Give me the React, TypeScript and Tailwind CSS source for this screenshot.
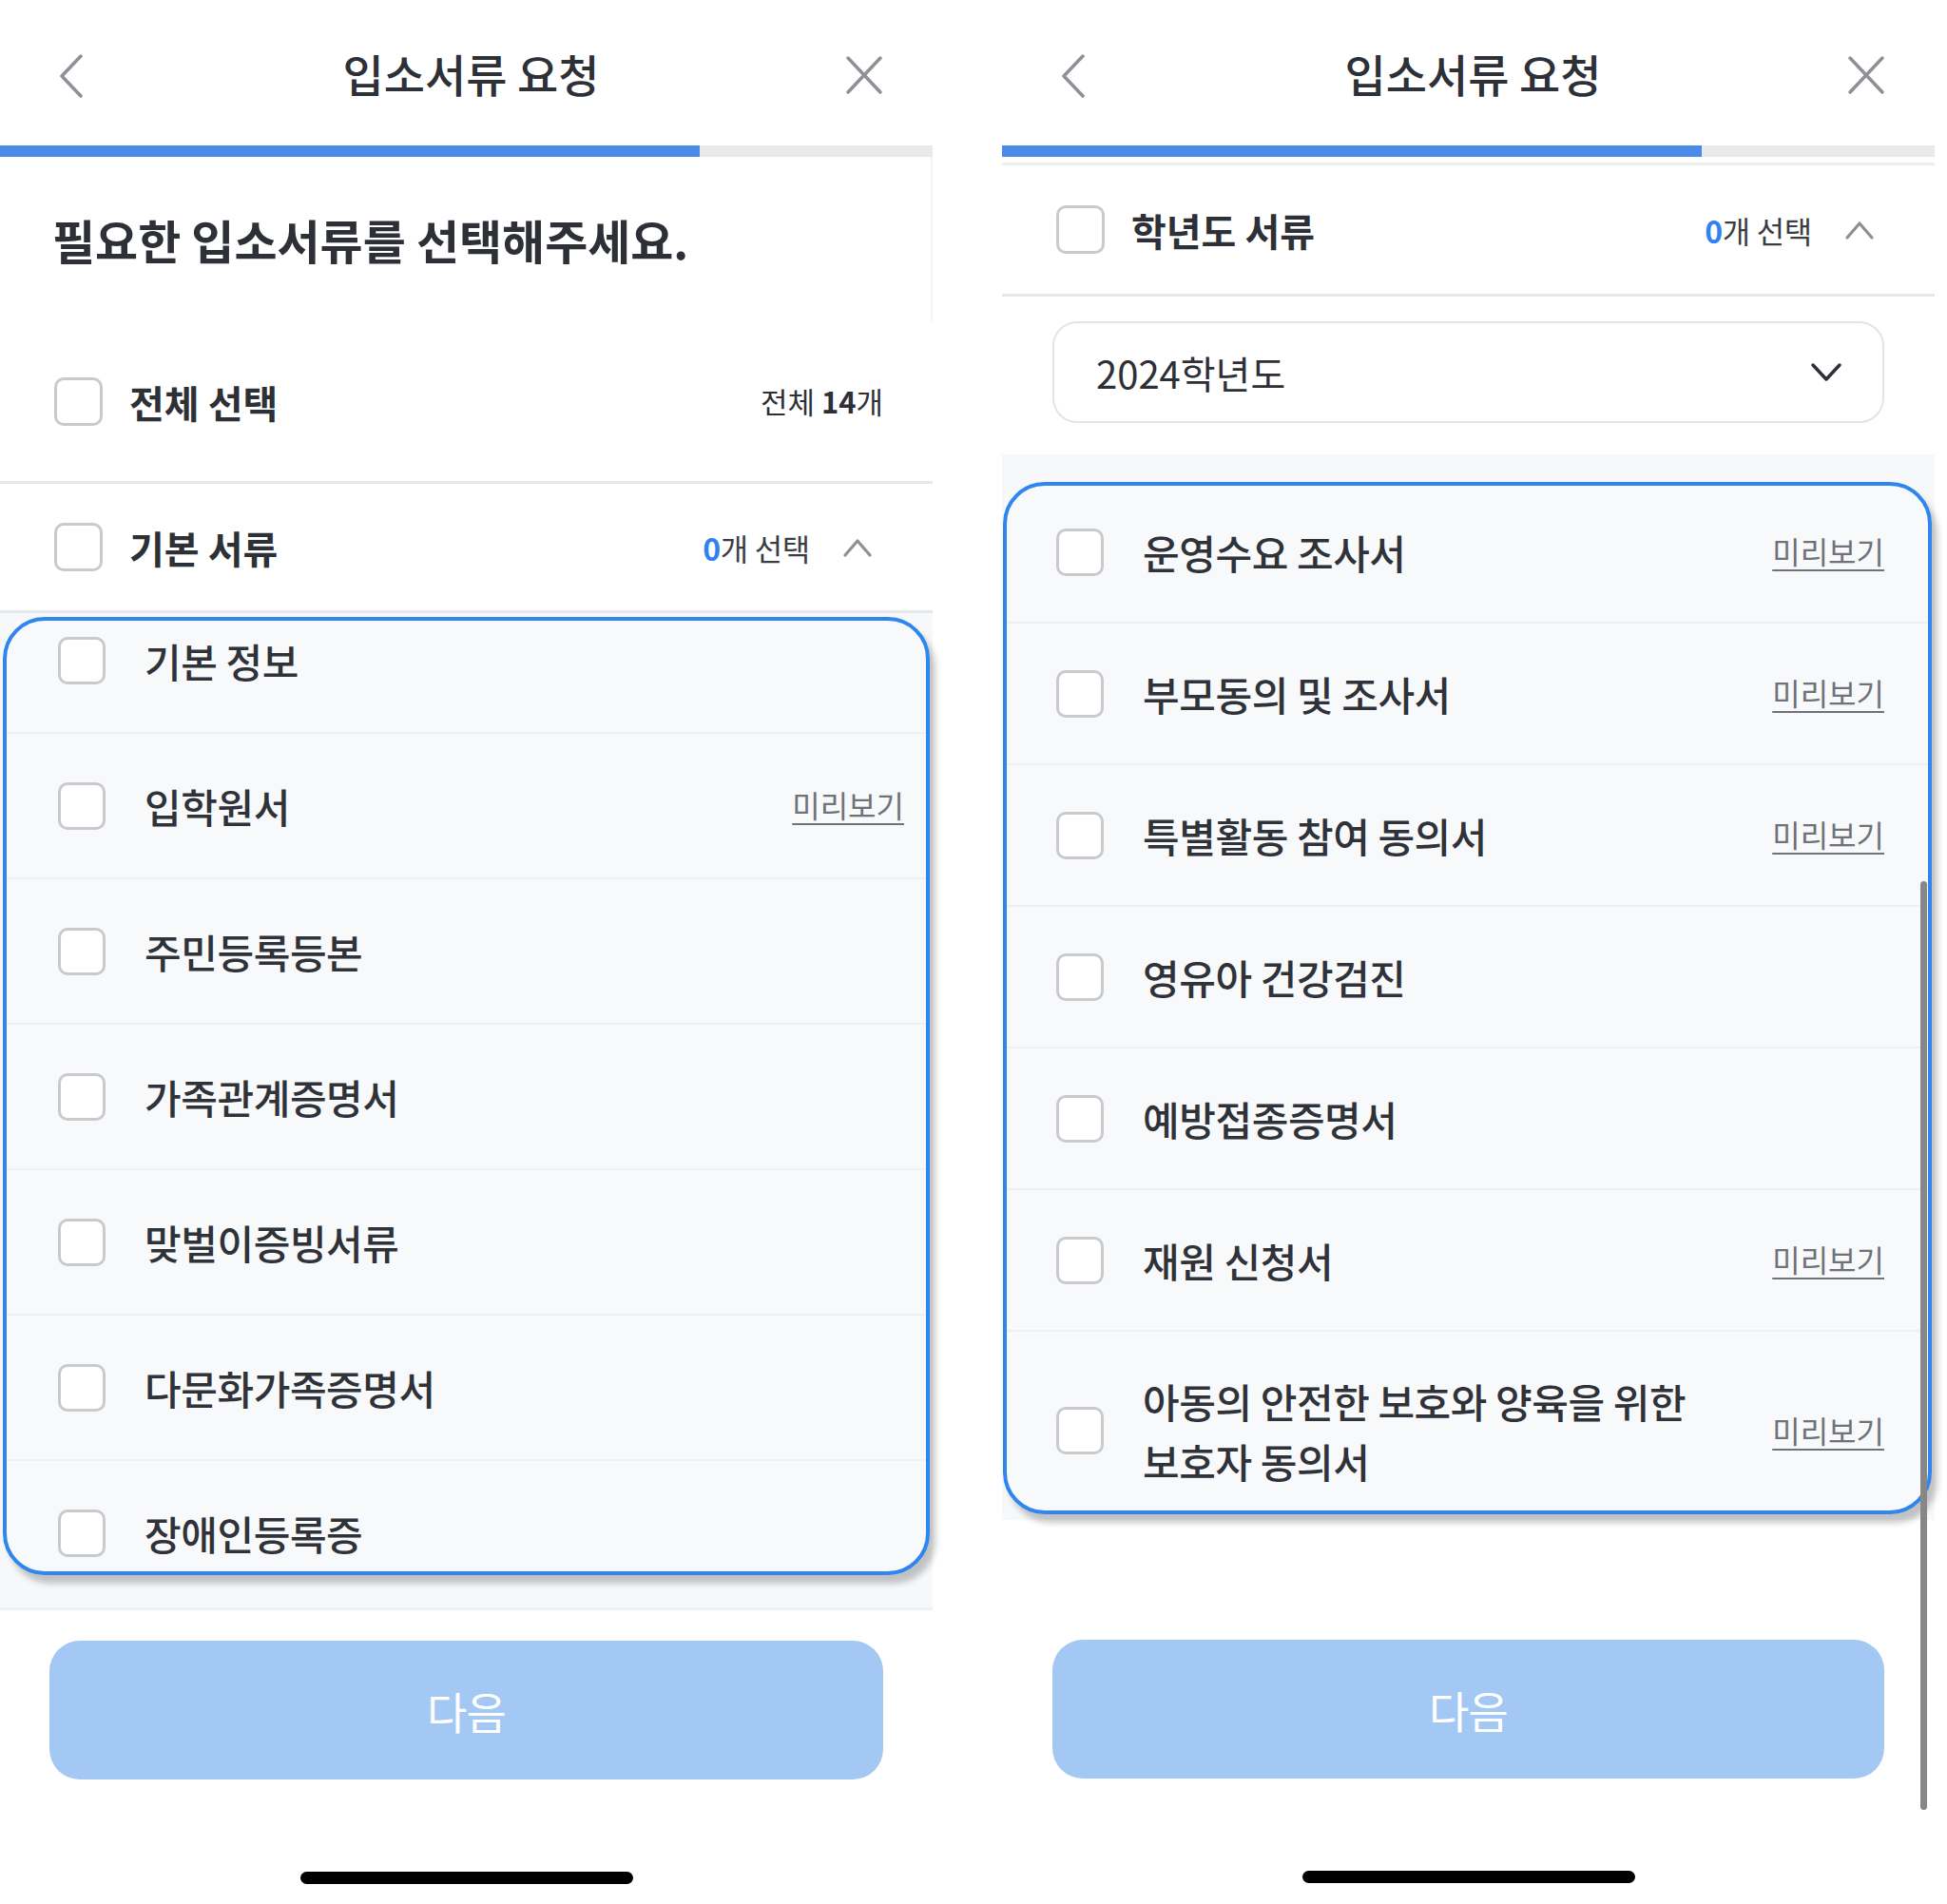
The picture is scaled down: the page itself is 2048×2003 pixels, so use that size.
import React from "react";

function Checkbox({ size = "w-[50px] h-[50px]" }: { size?: string }) {
  return (
    <div
      className={`shrink-0 ${size} rounded-[10px] border-[3.5px] border-[#c9cacd] bg-white`}
    />
  );
}

function ChevronLeft() {
  return (
    <svg width="26" height="46" viewBox="0 0 26 46" fill="none">
      <path
        d="M23 2 L3 23 L23 44"
        stroke="#8d9095"
        strokeWidth="3.5"
        strokeLinecap="round"
        strokeLinejoin="round"
      />
    </svg>
  );
}

function CloseX() {
  return (
    <svg width="40" height="42" viewBox="0 0 40 42" fill="none">
      <path
        d="M3 3 L37 39 M37 3 L3 39"
        stroke="#8d9095"
        strokeWidth="3.5"
        strokeLinecap="round"
      />
    </svg>
  );
}

function ChevronUp() {
  return (
    <svg width="32" height="22" viewBox="0 0 32 22" fill="none">
      <path
        d="M3 19 L16 4 L29 19"
        stroke="#8d9095"
        strokeWidth="3.2"
        strokeLinecap="round"
        strokeLinejoin="round"
      />
    </svg>
  );
}

function ChevronDown() {
  return (
    <svg width="34" height="22" viewBox="0 0 34 22" fill="none">
      <path
        d="M3 3 L17 18 L31 3"
        stroke="#2d3036"
        strokeWidth="3.5"
        strokeLinecap="round"
        strokeLinejoin="round"
      />
    </svg>
  );
}

function Header() {
  return (
    <div className="grid h-[153px] grid-cols-[1fr_auto_1fr] items-center pl-[62px] pr-[52px]">
      <div className="flex pt-[6px]">
        <ChevronLeft />
      </div>
      <div className="text-[47px] font-medium leading-none text-[#2d3036]">
        입소서류 요청
      </div>
      <div className="flex justify-end pt-[4px]">
        <CloseX />
      </div>
    </div>
  );
}

function Progress() {
  return (
    <div className="h-[12px] bg-[#e8e9eb]">
      <div className="h-full w-[75%] bg-[#4a8ae8]" />
    </div>
  );
}

function SectionRow({ title, height }: { title: string; height: string }) {
  return (
    <div className={`flex ${height} items-center border-b-[3px] border-[#e6e7e9] pl-[57px] pr-[63px]`}>
      <Checkbox size="w-[51px] h-[51px]" />
      <div className="ml-[28px] text-[40px] font-bold text-[#2d3036]">
        {title}
      </div>
      <div className="ml-auto flex items-center gap-[34px]">
        <div className="text-[32px] tracking-[-0.01em] text-[#3a3d43]">
          <span className="font-semibold text-[#3083ef]">0</span>개 선택
        </div>
        <ChevronUp />
      </div>
    </div>
  );
}

function Preview() {
  return (
    <span className="text-[32px] leading-none text-[#6f7278] underline decoration-[2px] underline-offset-[6px]">
      미리보기
    </span>
  );
}

function Item({
  label,
  preview,
  rowClass,
  gap,
}: {
  label: React.ReactNode;
  preview?: boolean;
  rowClass: string;
  gap: string;
}) {
  return (
    <div className={`flex shrink-0 items-center border-b-[2px] border-[#eef0f2] ${rowClass}`}>
      <Checkbox />
      <div
        className={`${gap} text-[42px] font-medium leading-[63px] tracking-[-0.01em] text-[#2f3238]`}
      >
        {label}
      </div>
      {preview && <div className="ml-auto">{<Preview />}</div>}
    </div>
  );
}

function Button() {
  return (
    <div className="flex h-[146px] items-center justify-center rounded-[32px] bg-[#a4c8f4] text-[46px] tracking-[-0.02em] text-white">
      다음
    </div>
  );
}

function HomeBar() {
  return <div className="mx-auto h-[13px] w-[350px] rounded-full bg-black" />;
}

const leftItems: { label: string; preview?: boolean }[] = [
  { label: "기본 정보" },
  { label: "입학원서", preview: true },
  { label: "주민등록등본" },
  { label: "가족관계증명서" },
  { label: "맞벌이증빙서류" },
  { label: "다문화가족증명서" },
  { label: "장애인등록증" },
];

const rightItems: { label: string; preview?: boolean }[] = [
  { label: "운영수요 조사서", preview: true },
  { label: "부모동의 및 조사서", preview: true },
  { label: "특별활동 참여 동의서", preview: true },
  { label: "영유아 건강검진" },
  { label: "예방접종증명서" },
  { label: "재원 신청서", preview: true },
];

function LeftPanel() {
  return (
    <div className="flex w-[981px] shrink-0 flex-col">
      <Header />
      <Progress />
      <div className="flex h-[174px] items-start border-r-[2px] border-[#f3f4f6] pl-[55px] pt-[56px]">
        <div className="text-[49px] font-bold leading-[62px] text-[#2d3036]">
          필요한 입소서류를 선택해주세요.
        </div>
      </div>
      <div className="flex h-[170px] items-center border-b-[3px] border-[#e6e7e9] pl-[57px] pr-[52px]">
        <Checkbox size="w-[51px] h-[51px]" />
        <div className="ml-[28px] text-[40px] font-bold text-[#2d3036]">
          전체 선택
        </div>
        <div className="ml-auto text-[31px] text-[#2d3036]">
          전체 <span className="font-bold">14</span>개
        </div>
      </div>
      <SectionRow title="기본 서류" height="h-[136px]" />
      <div className="flex h-[1049px] flex-col border-b-[3px] border-[#eef0f2] bg-[#f7f8fa] pl-[3px] pr-[3px] pt-[4px]">
        <div className="flex h-[1008px] flex-col overflow-hidden rounded-[44px] border-[4px] border-[#2f86ee] bg-[#f8f9fb] shadow-[6px_9px_6px_rgba(0,0,0,0.22)]">
          <div className="-mt-[34px] flex flex-col">
            {leftItems.map((it) => (
              <Item
                key={it.label}
                label={it.label}
                preview={it.preview}
                rowClass="h-[153px] pl-[54px] pr-[23px]"
                gap="ml-[41px]"
              />
            ))}
          </div>
        </div>
      </div>
      <div className="px-[52px] pt-[32px]">
        <Button />
      </div>
      <div className="pt-[97px]">
        <HomeBar />
      </div>
    </div>
  );
}

function RightPanel() {
  return (
    <div className="relative flex w-[981px] shrink-0 flex-col">
      <Header />
      <Progress />
      <div className="h-[9px] border-b-[3px] border-[#eceef0]" />
      <SectionRow title="학년도 서류" height="h-[138px]" />
      <div className="h-[166px] px-[53px] pt-[26px]">
        <div className="flex h-[107px] items-center justify-between rounded-[26px] border-[2.5px] border-[#e2e4e7] bg-white pl-[44px] pr-[42px]">
          <span className="text-[40px] text-[#2d3036]">2024학년도</span>
          <ChevronDown />
        </div>
      </div>
      <div className="flex flex-col bg-[#f7f8fa] pb-[6px] pl-[1px] pr-[3px] pt-[29px]">
        <div className="flex h-[1086px] flex-col overflow-hidden rounded-[44px] border-[4px] border-[#2f86ee] bg-[#f8f9fb] shadow-[6px_9px_6px_rgba(0,0,0,0.22)]">
          <div className="-mt-[4px] flex flex-col">
            {rightItems.map((it) => (
              <Item
                key={it.label}
                label={it.label}
                preview={it.preview}
                rowClass="h-[149px] pl-[52px] pr-[46px]"
                gap="ml-[41px]"
              />
            ))}
            <Item
              label={
                <>
                  아동의 안전한 보호와 양육을 위한
                  <br />
                  보호자 동의서
                </>
              }
              preview
              rowClass="pl-[52px] pr-[46px] pt-[41px] pb-[40px]"
              gap="ml-[41px]"
            />
          </div>
        </div>
      </div>
      <div className="px-[53px] pt-[126px]">
        <Button />
      </div>
      <div className="pt-[97px]">
        <HomeBar />
      </div>
      <div className="absolute left-[966px] top-[927px] h-[977px] w-[7px] rounded-full bg-[#878787]" />
    </div>
  );
}

export default function App() {
  return (
    <div className="flex h-[2003px] w-[2048px] gap-[73px] overflow-hidden bg-white font-['Noto_Sans_CJK_KR','Noto_Sans',sans-serif]">
      <LeftPanel />
      <RightPanel />
    </div>
  );
}
